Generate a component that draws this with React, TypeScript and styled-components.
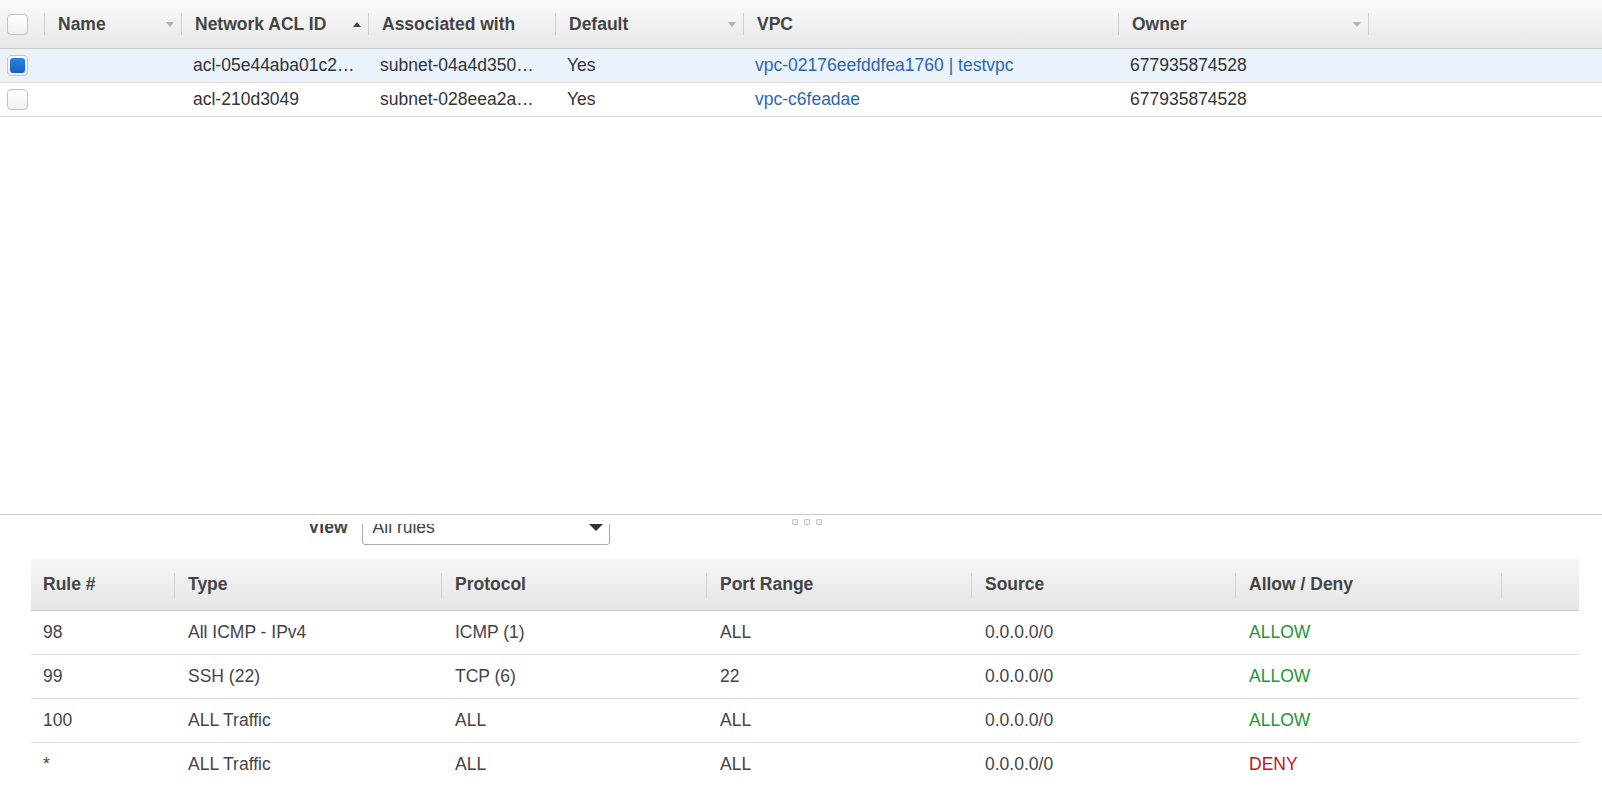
import React from "react";
import styled, { createGlobalStyle, css } from "styled-components";

const Global = createGlobalStyle`
  html, body { margin: 0; padding: 0; background: #fff; }
  body {
    font-family: "Liberation Sans", Arial, Helvetica, sans-serif;
    font-size: 17.5px;
    color: #333;
  }
  * { box-sizing: border-box; }
`;

const Page = styled.div`
  width: 1602px;
  height: 786px;
  display: flex;
  flex-direction: column;
  overflow: hidden;
`;

const TopPane = styled.div`
  height: 514px;
  flex: none;
  overflow: hidden;
`;

const ACL_COLS = "44px 137px 187px 187px 188px 375px 250px 1fr";

const AclHead = styled.div`
  display: grid;
  grid-template-columns: ${ACL_COLS};
  height: 49px;
  background: linear-gradient(#fbfbfb, #e7e7e7);
  border-bottom: 1px solid #c9c9c9;
`;

const AclHeadCell = styled.div<{ $divider?: boolean }>`
  position: relative;
  display: flex;
  align-items: center;
  padding: 0 7px 0 14px;
  font-weight: bold;
  color: #444;
  white-space: nowrap;
  ${(p) =>
    p.$divider &&
    css`
      &::before {
        content: "";
        position: absolute;
        left: 0;
        top: 13px;
        bottom: 13px;
        width: 1px;
        background: #d0d0d0;
      }
    `}
`;

const CheckCell = styled.div`
  display: flex;
  align-items: center;
  padding-left: 7px;
`;

const SortArrow = styled.span<{ $up?: boolean }>`
  margin-left: auto;
  width: 0;
  height: 0;
  border-left: 4px solid transparent;
  border-right: 4px solid transparent;
  ${(p) =>
    p.$up
      ? css`
          border-bottom: 5px solid #444;
        `
      : css`
          border-top: 5px solid #b0b0b0;
        `}
`;

const Check = styled.span<{ $checked?: boolean }>`
  width: 21px;
  height: 21px;
  border: 1px solid #c2c2c2;
  border-radius: 4px;
  background: linear-gradient(#ffffff, #f0f0f0);
  display: flex;
  align-items: center;
  justify-content: center;
  ${(p) =>
    p.$checked &&
    css`
      &::after {
        content: "";
        width: 15px;
        height: 15px;
        border-radius: 3px;
        background: linear-gradient(#2c80e2, #1562c6);
      }
    `}
`;

const AclRow = styled.div<{ $selected?: boolean }>`
  display: grid;
  grid-template-columns: ${ACL_COLS};
  height: 34px;
  border-bottom: 1px solid #dcdcdc;
  background: ${(p) => (p.$selected ? "#eaf2fc" : "#fff")};
`;

const AclCell = styled.div<{ $link?: boolean }>`
  display: flex;
  align-items: center;
  padding: 0 8px 0 12px;
  white-space: nowrap;
  overflow: hidden;
  color: ${(p) => (p.$link ? "#2c66b0" : "#333")};
`;

const Splitter = styled.div`
  position: relative;
  flex: none;
  height: 10px;
  background: #fff;
  border-top: 1px solid #c8c8c8;
  z-index: 2;
`;

const Grip = styled.div`
  position: absolute;
  left: 792px;
  top: 4px;
  display: flex;
  gap: 6px;
`;

const GripDot = styled.span`
  width: 6px;
  height: 6px;
  border: 1px solid #c6c6c6;
  border-radius: 1px;
  background: #f3f3f3;
`;

const BottomPane = styled.div`
  flex: 1;
  overflow: hidden;
`;

const BottomInner = styled.div`
  margin-top: -15px;
  padding: 0 23px 0 31px;
`;

const ViewRow = styled.div`
  display: flex;
  align-items: center;
  height: 36px;
  padding-left: 277px;
`;

const ViewLabel = styled.span`
  font-weight: bold;
  color: #444;
  margin-right: 14px;
`;

const Select = styled.div`
  width: 248px;
  height: 36px;
  border: 1px solid #aaa;
  border-radius: 3px;
  background: #fff;
  display: flex;
  align-items: center;
  justify-content: space-between;
  padding: 0 6px 0 10px;
  color: #444;
`;

const SelectCaret = styled.span`
  width: 0;
  height: 0;
  border-left: 7px solid transparent;
  border-right: 7px solid transparent;
  border-top: 7px solid #333;
`;

const RULE_COLS = "143px 267px 265px 265px 264px 266px 1fr";

const RulesTable = styled.div`
  margin-top: 14px;
`;

const RulesHead = styled.div`
  display: grid;
  grid-template-columns: ${RULE_COLS};
  height: 52px;
  background: linear-gradient(#f6f6f6, #e5e5e5);
  border-bottom: 1px solid #cbcbcb;
`;

const RulesHeadCell = styled.div<{ $divider?: boolean }>`
  position: relative;
  display: flex;
  align-items: center;
  padding-left: ${(p) => (p.$divider ? "14px" : "12px")};
  font-weight: bold;
  color: #444;
  white-space: nowrap;
  ${(p) =>
    p.$divider &&
    css`
      &::before {
        content: "";
        position: absolute;
        left: 0;
        top: 14px;
        bottom: 12px;
        width: 1px;
        background: #d3d3d3;
      }
    `}
`;

const RulesRow = styled.div`
  display: grid;
  grid-template-columns: ${RULE_COLS};
  height: 44px;
  border-bottom: 1px solid #dedede;
`;

const RulesCell = styled.div<{ $tone?: "allow" | "deny"; $first?: boolean }>`
  display: flex;
  align-items: center;
  padding-left: ${(p) => (p.$first ? "12px" : "14px")};
  white-space: nowrap;
  color: ${(p) =>
    p.$tone === "allow" ? "#22963d" : p.$tone === "deny" ? "#c4121c" : "#444"};
`;

type Acl = {
  id: string;
  subnet: string;
  isDefault: string;
  vpc: string;
  owner: string;
  selected?: boolean;
};

const acls: Acl[] = [
  {
    id: "acl-05e44aba01c2…",
    subnet: "subnet-04a4d350…",
    isDefault: "Yes",
    vpc: "vpc-02176eefddfea1760 | testvpc",
    owner: "677935874528",
    selected: true,
  },
  {
    id: "acl-210d3049",
    subnet: "subnet-028eea2a…",
    isDefault: "Yes",
    vpc: "vpc-c6feadae",
    owner: "677935874528",
  },
];

type Rule = {
  num: string;
  type: string;
  protocol: string;
  port: string;
  source: string;
  action: "ALLOW" | "DENY";
};

const rules: Rule[] = [
  { num: "98", type: "All ICMP - IPv4", protocol: "ICMP (1)", port: "ALL", source: "0.0.0.0/0", action: "ALLOW" },
  { num: "99", type: "SSH (22)", protocol: "TCP (6)", port: "22", source: "0.0.0.0/0", action: "ALLOW" },
  { num: "100", type: "ALL Traffic", protocol: "ALL", port: "ALL", source: "0.0.0.0/0", action: "ALLOW" },
  { num: "*", type: "ALL Traffic", protocol: "ALL", port: "ALL", source: "0.0.0.0/0", action: "DENY" },
];

export default function App() {
  return (
    <>
      <Global />
      <Page>
        <TopPane>
          <AclHead>
            <CheckCell>
              <Check />
            </CheckCell>
            <AclHeadCell $divider>
              Name
              <SortArrow />
            </AclHeadCell>
            <AclHeadCell $divider>
              Network ACL ID
              <SortArrow $up />
            </AclHeadCell>
            <AclHeadCell $divider>Associated with</AclHeadCell>
            <AclHeadCell $divider>
              Default
              <SortArrow />
            </AclHeadCell>
            <AclHeadCell $divider>VPC</AclHeadCell>
            <AclHeadCell $divider>
              Owner
              <SortArrow />
            </AclHeadCell>
            <AclHeadCell $divider />
          </AclHead>
          {acls.map((a) => (
            <AclRow key={a.id} $selected={a.selected}>
              <CheckCell>
                <Check $checked={a.selected} />
              </CheckCell>
              <AclCell />
              <AclCell>{a.id}</AclCell>
              <AclCell>{a.subnet}</AclCell>
              <AclCell>{a.isDefault}</AclCell>
              <AclCell $link>{a.vpc}</AclCell>
              <AclCell>{a.owner}</AclCell>
              <AclCell />
            </AclRow>
          ))}
        </TopPane>
        <Splitter>
          <Grip>
            <GripDot />
            <GripDot />
            <GripDot />
          </Grip>
        </Splitter>
        <BottomPane>
          <BottomInner>
            <ViewRow>
              <ViewLabel>View</ViewLabel>
              <Select>
                <span>All rules</span>
                <SelectCaret />
              </Select>
            </ViewRow>
            <RulesTable>
              <RulesHead>
                <RulesHeadCell>Rule #</RulesHeadCell>
                <RulesHeadCell $divider>Type</RulesHeadCell>
                <RulesHeadCell $divider>Protocol</RulesHeadCell>
                <RulesHeadCell $divider>Port Range</RulesHeadCell>
                <RulesHeadCell $divider>Source</RulesHeadCell>
                <RulesHeadCell $divider>Allow / Deny</RulesHeadCell>
                <RulesHeadCell $divider />
              </RulesHead>
              {rules.map((r) => (
                <RulesRow key={r.num}>
                  <RulesCell $first>{r.num}</RulesCell>
                  <RulesCell>{r.type}</RulesCell>
                  <RulesCell>{r.protocol}</RulesCell>
                  <RulesCell>{r.port}</RulesCell>
                  <RulesCell>{r.source}</RulesCell>
                  <RulesCell $tone={r.action === "ALLOW" ? "allow" : "deny"}>
                    {r.action}
                  </RulesCell>
                  <RulesCell />
                </RulesRow>
              ))}
            </RulesTable>
          </BottomInner>
        </BottomPane>
      </Page>
    </>
  );
}
